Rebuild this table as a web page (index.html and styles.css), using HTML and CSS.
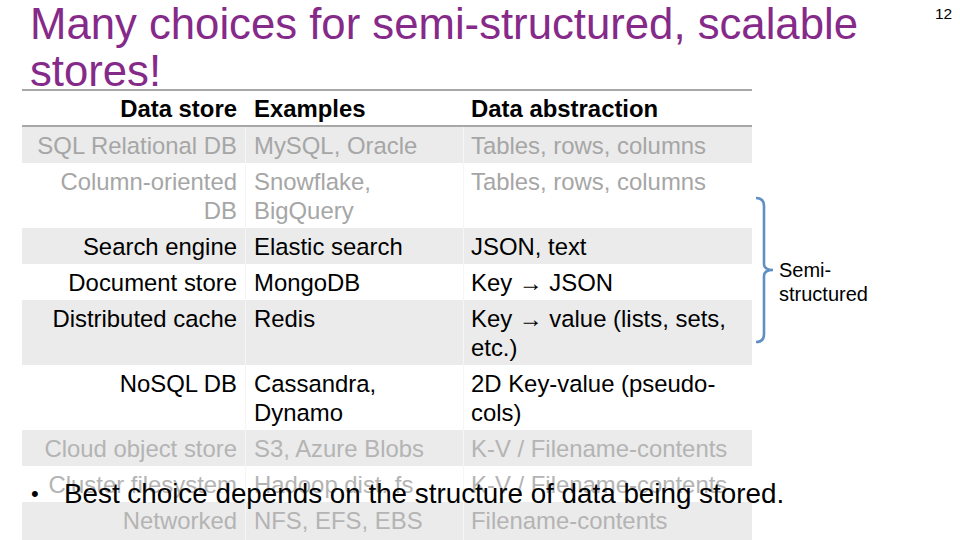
FILE: index.html
```html
<!DOCTYPE html>
<html>
<head>
<meta charset="utf-8">
<link rel="stylesheet" href="styles.css">
</head>
<body>
<div class="slide">
  <h1 class="title">Many choices for semi-structured, scalable<br>stores!</h1>
  <div class="table">
    <div class="row head">
      <div class="c1">Data store</div><div class="c2">Examples</div><div class="c3">Data abstraction</div>
    </div>
    <div class="row shade muted">
      <div class="c1">SQL Relational DB</div><div class="c2">MySQL, Oracle</div><div class="c3">Tables, rows, columns</div>
    </div>
    <div class="row muted">
      <div class="c1">Column-oriented<br>DB</div><div class="c2">Snowflake,<br>BigQuery</div><div class="c3">Tables, rows, columns</div>
    </div>
    <div class="row shade">
      <div class="c1">Search engine</div><div class="c2">Elastic search</div><div class="c3">JSON, text</div>
    </div>
    <div class="row">
      <div class="c1">Document store</div><div class="c2">MongoDB</div><div class="c3">Key → JSON</div>
    </div>
    <div class="row shade">
      <div class="c1">Distributed cache</div><div class="c2">Redis</div><div class="c3">Key → value (lists, sets,<br>etc.)</div>
    </div>
    <div class="row">
      <div class="c1">NoSQL DB</div><div class="c2">Cassandra,<br>Dynamo</div><div class="c3">2D Key-value (pseudo-<br>cols)</div>
    </div>
    <div class="row shade faint">
      <div class="c1">Cloud object store</div><div class="c2">S3, Azure Blobs</div><div class="c3">K-V / Filename-contents</div>
    </div>
    <div class="row faint">
      <div class="c1">Cluster filesystem</div><div class="c2">Hadoop dist. fs</div><div class="c3">K-V / Filename-contents</div>
    </div>
    <div class="row shade faint">
      <div class="c1">Networked<br>filesystem</div><div class="c2">NFS, EFS, EBS</div><div class="c3">Filename-contents</div>
    </div>
  </div>

  <svg class="brace" width="30" height="160" viewBox="0 0 30 160">
    <path d="M5 8 Q13 8 13 16 L13 74 Q13 80 22 80 Q13 80 13 86 L13 144 Q13 152 5 152" fill="none" stroke="#5f8fc4" stroke-width="2.6"/>
  </svg>
  <div class="semi">Semi-<br>structured</div>

  <div class="bullet"><span class="dot">•</span><span>Best choice depends on the structure of data being stored.</span></div>
  <div class="pagenum">12</div>
</div>
</body>
</html>
```

FILE: styles.css
```css
html, body {
  margin: 0;
  padding: 0;
  background: #ffffff;
}
body {
  width: 960px;
  height: 540px;
  overflow: hidden;
  font-family: "Liberation Sans", Arial, sans-serif;
}
.slide {
  position: relative;
  width: 960px;
  height: 540px;
  overflow: hidden;
}
.title {
  margin: 0 0 0 30px;
  font-weight: normal;
  font-size: 43.7px;
  line-height: 47px;
  color: #862a8a;
}
.table {
  margin: -5px 0 0 22px;
  width: 730px;
  border-top: 2px solid #a8a8a8;
  font-size: 23.9px;
  line-height: 29px;
  color: #000;
}
.row {
  display: grid;
  grid-template-columns: 223px 218px 289px;
  white-space: nowrap;
}
.row > div {
  padding: 4px 0 3px;
}
.row .c1 {
  text-align: right;
  padding-right: 8px;
}
.row .c2 {
  padding-left: 8px;
  border-left: 1px solid #f6f6f6;
}
.row .c3 {
  padding-left: 7px;
  border-left: 1px solid #f6f6f6;
}
.row.head {
  font-weight: bold;
  border-bottom: 2px solid #a8a8a8;
}
.row.head > div {
  padding: 3px 0 2px;
  border-left: none;
}
.row.head .c1 { padding-right: 8px; }
.row.head .c2 { padding-left: 9px; }
.row.head .c3 { padding-left: 8px; }
.shade {
  background: #ebebeb;
}
.muted {
  color: #a6a6a6;
}
.faint {
  color: #b4b4b4;
}
.brace {
  position: absolute;
  left: 751px;
  top: 190px;
}
.semi {
  position: absolute;
  left: 779px;
  top: 258px;
  font-size: 20px;
  line-height: 24px;
  color: #000;
}
.bullet {
  position: absolute;
  left: 27px;
  top: 480px;
  display: flex;
  font-size: 27.8px;
  line-height: 28px;
  color: #000;
  white-space: nowrap;
}
.bullet .dot {
  width: 33px;
  font-size: 22px;
  padding-left: 4px;
}
.pagenum {
  position: absolute;
  left: 935px;
  top: 5px;
  font-size: 15.5px;
  line-height: 18px;
  color: #000;
}
```
